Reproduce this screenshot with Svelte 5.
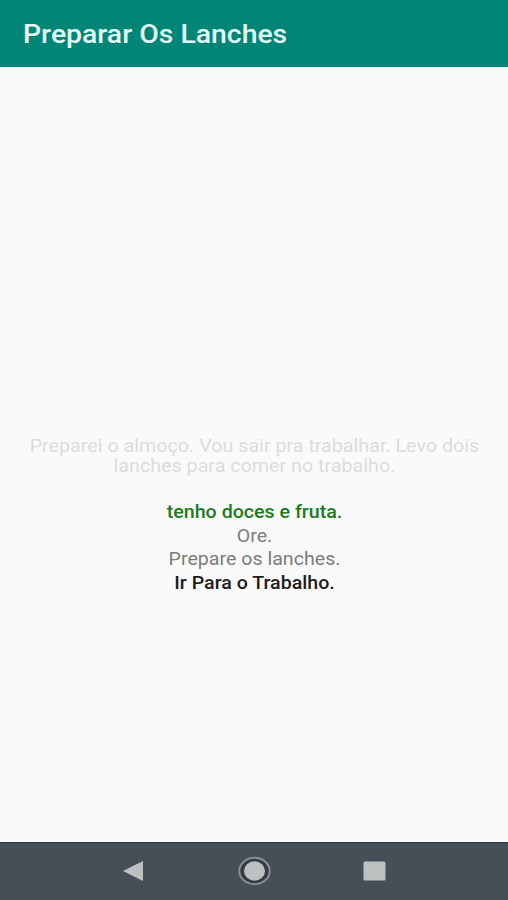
<script>
  const title = "Preparar Os Lanches";

  const story = [
    "Preparei o almoço. Vou sair pra trabalhar. Levo dois",
    "lanches para comer no trabalho.",
  ];

  const options = [
    { label: "tenho doces e fruta.", state: "chosen" },
    { label: "Ore.", state: "idle" },
    { label: "Prepare os lanches.", state: "idle" },
    { label: "Ir Para o Trabalho.", state: "next" },
  ];
</script>

<div class="screen">
  <header class="app-bar">
    <h1>{title}</h1>
  </header>

  <main>
    <p class="story">
      {#each story as line}
        <span>{line}</span>
      {/each}
    </p>

    <ul class="options">
      {#each options as option}
        <li class={option.state}>{option.label}</li>
      {/each}
    </ul>
  </main>

  <nav class="system-bar" aria-label="System navigation">
    <svg width="508" height="57" viewBox="0 0 508 57" aria-hidden="true">
      <path class="icon" d="M123 28 L143 18 V38 Z" />
      <ellipse class="ring" cx="254.5" cy="28" rx="15.2" ry="13.2" />
      <ellipse class="icon" cx="254.5" cy="28" rx="10.5" ry="9.7" />
      <rect class="icon" x="363.5" y="18.5" width="22" height="19" rx="1.5" />
    </svg>
  </nav>
</div>

<style>
  :global(body) {
    margin: 0;
    background: #fafafa;
  }

  .screen {
    width: 508px;
    height: 900px;
    display: flex;
    flex-direction: column;
    overflow: hidden;
    background: #fafafa;
    font-family: Roboto, sans-serif;
  }

  .app-bar {
    height: 67px;
    display: flex;
    align-items: center;
    padding: 2px 23px 0;
    box-sizing: border-box;
    background: #018577;
  }

  h1 {
    margin: 0;
    color: #e4fbf8;
    font-size: 25px;
    font-weight: 500;
    line-height: 30px;
    white-space: nowrap;
    transform: scaleX(1.135);
    transform-origin: left center;
  }

  main {
    flex: 1;
    display: flex;
    flex-direction: column;
    align-items: center;
    padding: 369px 0 0 1px;
    font-size: 18px;
    text-align: center;
    white-space: nowrap;
  }

  .story {
    margin: 0 0 24px;
    color: #dcdcdc;
    line-height: 20px;
    transform: scaleX(1.094);
  }

  .story span {
    display: block;
  }

  .options {
    margin: 0;
    padding: 0;
    list-style: none;
    line-height: 23.5px;
    transform: scaleX(1.09);
  }

  .idle {
    color: #7c7c7c;
  }

  .chosen {
    color: #1b7a22;
    font-weight: 500;
  }

  .next {
    color: #1c1c1c;
    font-weight: 500;
  }

  .system-bar {
    height: 58px;
    box-sizing: border-box;
    border-top: 1px solid #2f383e;
    background: #464f58;
  }

  svg {
    display: block;
  }

  .icon {
    fill: #bcc0c1;
  }

  .ring {
    fill: #353d43;
    stroke: #899091;
    stroke-width: 2;
  }
</style>
